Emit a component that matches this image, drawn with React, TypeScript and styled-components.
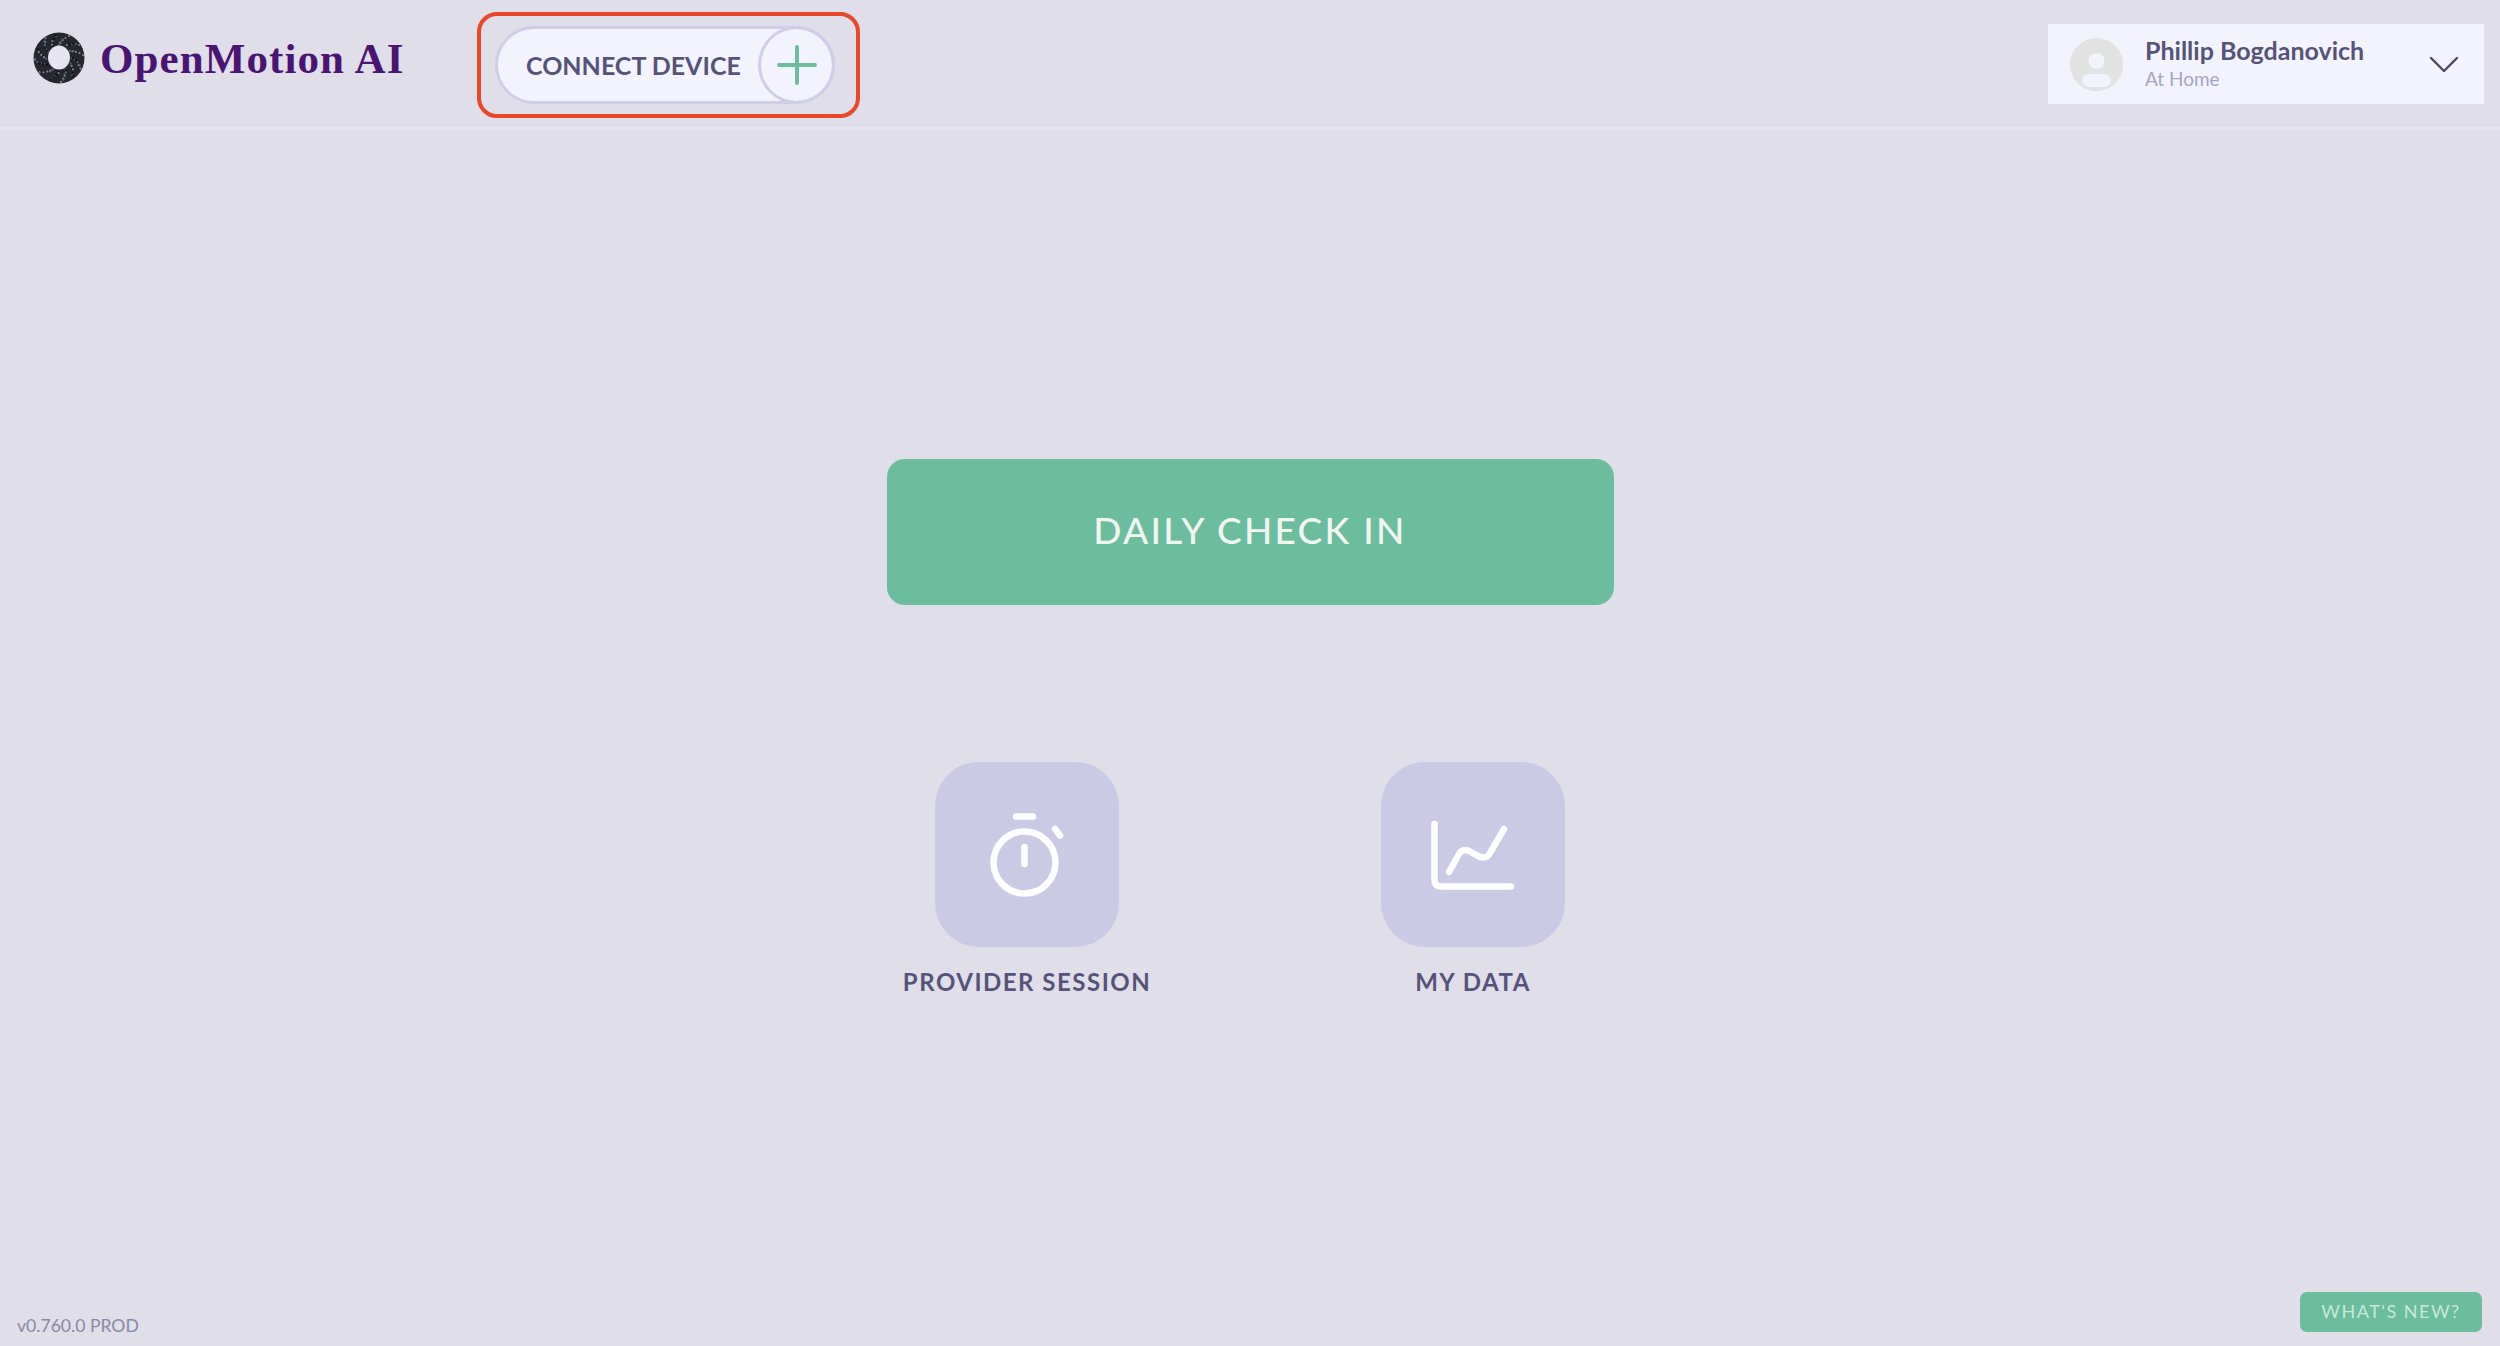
import { createGlobalStyle } from 'styled-components';
import styled from 'styled-components';

const GlobalStyle = createGlobalStyle`
    html, body {
        margin: 0;
        padding: 0;
        background: #e0dee9;
        font-family: Lato, "Open Sans", sans-serif;
    }
`;

const Page = styled.div`
    min-height: 100vh;
    display: flex;
    flex-direction: column;
    box-sizing: border-box;
`;
const Header = styled.header`
    height: 130px;
    box-sizing: border-box;
    border-bottom: 3px solid #e6e5ee;
    display: flex;
    align-items: flex-start;
    padding: 12px 16px 0 32px;
`;
const Brand = styled.div`
    display: flex;
    align-items: center;
    gap: 14px;
    width: 445px;
    height: 92px;
`;
const BrandName = styled.span`
    font-family: "Liberation Serif", serif;
    font-weight: 700;
    font-size: 43px;
    letter-spacing: 1.1px;
    color: #4a1472;
`;
const Highlight = styled.div`
    width: 383px;
    height: 106px;
    box-sizing: border-box;
    border: 4px solid #e8472a;
    border-radius: 20px;
    display: flex;
    align-items: center;
    padding-left: 14px;
`;
const ConnectPill = styled.button`
    width: 340px;
    height: 78px;
    box-sizing: border-box;
    background: #f2f3fc;
    border: 3px solid #cfcee6;
    border-radius: 39px;
    padding: 0 0 0 28px;
    display: flex;
    align-items: center;
    justify-content: space-between;
    font: inherit;
    font-size: 25px;
    font-weight: 700;
    color: #56537a;
    white-space: nowrap;
`;
const PlusCircle = styled.span`
    width: 77px;
    height: 78px;
    margin: -3px -3px -3px 0;
    box-sizing: border-box;
    border: 3px solid #cfcee6;
    border-radius: 50%;
    display: flex;
    align-items: center;
    justify-content: center;
`;
const UserBox = styled.div`
    margin-left: auto;
    margin-top: 12px;
    width: 436px;
    height: 80px;
    box-sizing: border-box;
    background: #f2f3fc;
    display: flex;
    align-items: center;
    padding: 0 25px 0 22px;
`;
const UserText = styled.div`
    margin-left: 22px;
    margin-top: -2px;
    display: flex;
    flex-direction: column;
    flex: 1;
`;
const UserName = styled.span`
    font-size: 25px;
    line-height: 30px;
    margin-bottom: 2px;
    font-weight: 700;
    color: #56537a;
`;
const UserPlace = styled.span`
    font-size: 19px;
    line-height: 24px;
    color: #a6a5bd;
`;
const Main = styled.main`
    flex: 1;
    display: flex;
    flex-direction: column;
    align-items: center;
    padding-top: 329px;
`;
const CheckInButton = styled.button`
    width: 727px;
    height: 146px;
    border: none;
    border-radius: 18px;
    background: #6bbd9d;
    color: #f1f4f0;
    font: inherit;
    font-size: 37px;
    font-weight: 500;
    letter-spacing: 2.3px;
    padding: 0 0 5px;
`;
const Shortcuts = styled.div`
    margin-top: 157px;
    display: flex;
    gap: 157px;
`;
const Shortcut = styled.div`
    width: 289px;
    display: flex;
    flex-direction: column;
    align-items: center;
    gap: 20px;
`;
const Tile = styled.div`
    width: 184px;
    height: 185px;
    border-radius: 44px;
    background: #cacae5;
    display: flex;
    align-items: center;
    justify-content: center;
`;
const ShortcutLabel = styled.span`
    font-size: 24px;
    line-height: 30px;
    font-weight: 700;
    letter-spacing: 1.5px;
    color: #56537a;
    white-space: nowrap;
`;
const Footer = styled.footer`
    display: flex;
    justify-content: space-between;
    align-items: flex-end;
    padding: 0 18px 14px 17px;
`;
const Version = styled.span`
    font-size: 17.6px;
    line-height: 20px;
    margin-bottom: -4px;
    color: #8a88a3;
`;
const WhatsNew = styled.button`
    width: 182px;
    height: 40px;
    border: none;
    border-radius: 7px;
    background: #6bbd9d;
    color: #c9e8da;
    font: inherit;
    font-size: 18px;
    letter-spacing: 1.5px;
    padding: 0 0 2px;
`;

// speckles for the logo ring, placed by a fixed pattern so the ring looks grainy
const speckles = Array.from({ length: 90 }, (_, i) => {
    const angle = i * 2.399;
    const radius = 13 + ((i * 7) % 12);
    return {
        x: 27 + Math.cos(angle) * radius,
        y: 26 + Math.sin(angle) * radius,
        color: i % 3 === 0 ? '#55647e' : i % 3 === 1 ? '#0f1014' : '#7f8592',
    };
});

const LogoRing = () => (
    <svg width="54" height="52" viewBox="0 0 54 52">
        <circle cx="27" cy="26" r="25.5" fill="#26272d" />
        {speckles.map((s, i) => (
            <circle key={i} cx={s.x} cy={s.y} r="1.1" fill={s.color} />
        ))}
        <ellipse cx="27" cy="25.5" rx="11" ry="12" fill="#e6e4ee" />
    </svg>
);

const Plus = () => (
    <svg width="40" height="40" viewBox="0 0 40 40" fill="none" stroke="#6bbd9d" strokeWidth="4" strokeLinecap="round">
        <path d="M20 2v36M2 20h36" />
    </svg>
);

const Avatar = () => (
    <svg width="53" height="53" viewBox="0 0 53 53">
        <circle cx="26.5" cy="26.5" r="26.5" fill="#e2e2e2" />
        <circle cx="26.5" cy="23" r="8" fill="#f2f3fc" />
        <rect x="12" y="36" width="29" height="13" rx="6.5" fill="#f2f3fc" />
    </svg>
);

const Chevron = () => (
    <svg width="30" height="17" viewBox="0 0 30 17" fill="none" stroke="#4a4868" strokeWidth="2.4" strokeLinecap="round" strokeLinejoin="round">
        <path d="M2 2l13 13L28 2" />
    </svg>
);

const Stopwatch = () => (
    <svg width="80" height="100" viewBox="0 0 80 100" fill="none" stroke="#fff" strokeWidth="6.5" strokeLinecap="round">
        <circle cx="37.5" cy="57.5" r="31" />
        <path d="M29 11.5h17M37.5 42v17M68 24l5 6.5" />
    </svg>
);

const ChartIcon = () => (
    <svg width="100" height="90" viewBox="0 0 100 90" fill="none" stroke="#fff" strokeWidth="6.5" strokeLinecap="round" strokeLinejoin="round">
        <path d="M11.5 14V70q0 6.5 6.5 6.5H88" />
        <path d="M26 62L36 44q4-6 10-3l9 5q8 4 12-3L81 19" />
    </svg>
);

const App = () => (
    <Page>
        <GlobalStyle />
        <Header>
            <Brand>
                <LogoRing />
                <BrandName>OpenMotion AI</BrandName>
            </Brand>
            <Highlight>
                <ConnectPill>
                    CONNECT DEVICE
                    <PlusCircle>
                        <Plus />
                    </PlusCircle>
                </ConnectPill>
            </Highlight>
            <UserBox>
                <Avatar />
                <UserText>
                    <UserName>Phillip Bogdanovich</UserName>
                    <UserPlace>At Home</UserPlace>
                </UserText>
                <Chevron />
            </UserBox>
        </Header>
        <Main>
            <CheckInButton>DAILY CHECK IN</CheckInButton>
            <Shortcuts>
                <Shortcut>
                    <Tile>
                        <Stopwatch />
                    </Tile>
                    <ShortcutLabel>PROVIDER SESSION</ShortcutLabel>
                </Shortcut>
                <Shortcut>
                    <Tile>
                        <ChartIcon />
                    </Tile>
                    <ShortcutLabel>MY DATA</ShortcutLabel>
                </Shortcut>
            </Shortcuts>
        </Main>
        <Footer>
            <Version>v0.760.0 PROD</Version>
            <WhatsNew>WHAT'S NEW?</WhatsNew>
        </Footer>
    </Page>
);

export default App;
